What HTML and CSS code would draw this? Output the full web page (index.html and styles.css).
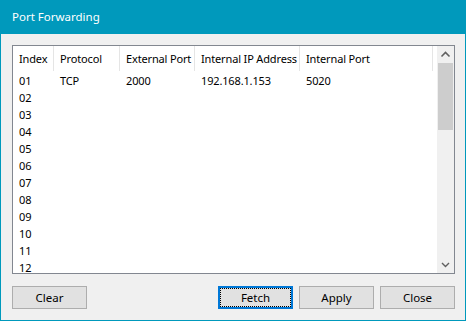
FILE: index.html
```html
<!DOCTYPE html>
<html>
<head>
<meta charset="utf-8">
<link rel="stylesheet" href="styles.css">
</head>
<body>
<div class="window">
  <div class="titlebar">Port Forwarding</div>
  <div class="content">
    <div class="listview">
      <div class="table">
        <div class="row header">
          <div class="cell">Index</div>
          <div class="cell">Protocol</div>
          <div class="cell">External Port</div>
          <div class="cell">Internal IP Address</div>
          <div class="cell">Internal Port</div>
          <div class="cell filler"></div>
        </div>
        <div class="row"><div class="cell">01</div><div class="cell">TCP</div><div class="cell">2000</div><div class="cell ip">192.168.1.153</div><div class="cell">5020</div><div class="cell"></div></div>
        <div class="row"><div class="cell">02</div></div>
        <div class="row"><div class="cell">03</div></div>
        <div class="row"><div class="cell">04</div></div>
        <div class="row"><div class="cell">05</div></div>
        <div class="row"><div class="cell">06</div></div>
        <div class="row"><div class="cell">07</div></div>
        <div class="row"><div class="cell">08</div></div>
        <div class="row"><div class="cell">09</div></div>
        <div class="row"><div class="cell">10</div></div>
        <div class="row"><div class="cell">11</div></div>
        <div class="row"><div class="cell">12</div></div>
      </div>
      <div class="scrollbar">
        <div class="arrow"><svg width="17" height="17" viewBox="0 0 17 17"><path d="M4.5 10.5 L8.5 6.5 L12.5 10.5" fill="none" stroke="#606060" stroke-width="1.6"/></svg></div>
        <div class="track"><div class="thumb"></div></div>
        <div class="arrow"><svg width="17" height="17" viewBox="0 0 17 17"><path d="M5 7 L8.5 10.5 L12 7" fill="none" stroke="#606060" stroke-width="1.4"/></svg></div>
      </div>
    </div>
    <div class="buttons">
      <button class="btn">Clear</button>
      <div class="spacer"></div>
      <button class="btn default">Fetch</button>
      <button class="btn">Apply</button>
      <button class="btn">Close</button>
    </div>
  </div>
</div>
</body>
</html>
```
FILE: styles.css
```css
* { box-sizing: border-box; }
html, body { margin: 0; padding: 0; }
body {
  width: 466px;
  height: 321px;
  overflow: hidden;
  font-family: "Noto Sans", "Open Sans", sans-serif;
  font-size: 11px;
  color: #000;
}
.window {
  width: 466px;
  height: 321px;
  border: 1px solid #0099bc;
  border-top: 0;
  background: #f0f0f0;
  display: flex;
  flex-direction: column;
}
.titlebar {
  height: 34px;
  background: #0099bc;
  color: #fff;
  padding-top: 8px;
  font-size: 11.5px;
  line-height: 17px;
  margin: 0 -1px;
  padding-left: 12px;
}
.content {
  flex: 1;
  padding: 11px 10px 0 11px;
  display: flex;
  flex-direction: column;
}
.listview {
  height: 229px;
  border: 1px solid #828790;
  background: #fff;
  display: flex;
  overflow: hidden;
}
.table {
  flex: 1;
  display: flex;
  flex-direction: column;
  overflow: hidden;
  letter-spacing: -0.15px;
}
.row {
  display: grid;
  grid-template-columns: 41px 66px 75px 105px 133px 1fr;
  height: 17px;
  flex: none;
  line-height: 17px;
}
.row .cell {
  padding-left: 6px;
  padding-top: 1px;
  white-space: nowrap;
  overflow: hidden;
}
.row.header {
  height: 25px;
  line-height: 24px;
}
.row.header .cell {
  border-right: 1px solid #e5e5e5;
}
.row.header .cell.filler { border-right: 0; }
.scrollbar {
  width: 17px;
  flex: none;
  background: #f0f0f0;
  display: flex;
  flex-direction: column;
}
.arrow {
  height: 17px;
  flex: none;
}
.arrow svg { display: block; }
.track { flex: 1; }
.thumb {
  margin: 0 1px;
  height: 67px;
  background: #cdcdcd;
}
.buttons {
  margin-top: 12px;
  display: flex;
  gap: 6px;
}
.spacer { flex: 1; }
.btn {
  width: 75px;
  height: 23px;
  background: #e1e1e1;
  border: 1px solid #adadad;
  font-family: "Noto Sans", "Open Sans", sans-serif;
  font-size: 11.5px;
  color: #000;
  padding: 0;
  line-height: 19px;
  border-radius: 0;
}
.btn.default {
  border: 2px solid #0078d7;
  outline: 1px dotted #000;
  outline-offset: -3px;
}
```
